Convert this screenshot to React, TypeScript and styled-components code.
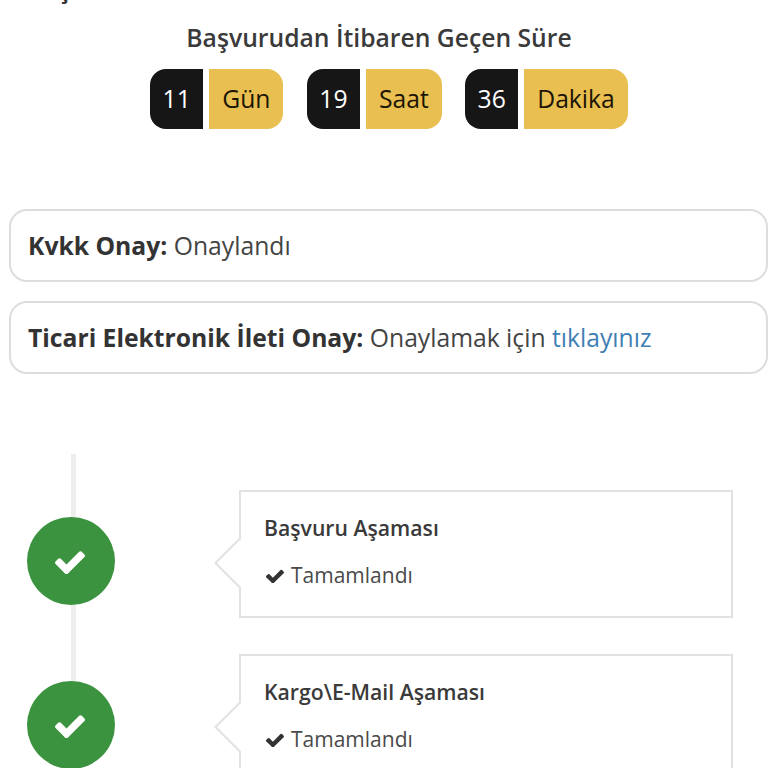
import styled, { createGlobalStyle } from 'styled-components';

const GlobalStyle = createGlobalStyle`
    html, body {
        margin: 0;
        padding: 0;
        background: #fff;
        overflow: hidden;
    }

    body {
        font-family: "Open Sans", "Liberation Sans", sans-serif;
        color: #333;
    }
`;

const Page = styled.div`
    width: 768px;
    height: 768px;
    overflow: hidden;
`;

const PageTitle = styled.h1`
    margin: -27px 0 0 28px;
    font-size: 24px;
    line-height: 32px;
    font-weight: 700;
    color: #333;
`;

const Elapsed = styled.section`
    padding-top: 17px;
    display: flex;
    flex-direction: column;
    align-items: center;
`;

const ElapsedTitle = styled.h2`
    margin: 0 10px 15px 0;
    font-size: 24.7px;
    line-height: 32px;
    font-weight: 600;
    color: #3a3a3a;
`;

const Counters = styled.div`
    display: flex;
    gap: 23.5px;
    margin-left: 10px;
`;

const Counter = styled.div`
    display: flex;
    gap: 6px;
    height: 60px;
`;

const CounterValue = styled.span`
    background: #161616;
    color: #fff;
    width: 53px;
    padding-bottom: 2px;
    box-sizing: border-box;
    border-radius: 16px 0 0 16px;
    display: flex;
    align-items: center;
    justify-content: center;
    font-size: 24.7px;
`;

const CounterUnit = styled.span`
    background: #e8bf50;
    color: #1c1505;
    padding: 0 13px 2px;
    border-radius: 0 16px 16px 0;
    display: flex;
    align-items: center;
    font-size: 24.7px;
`;

const Consents = styled.section`
    margin: 80px 0 0 9px;
    display: flex;
    flex-direction: column;
    gap: 19px;
`;

const ConsentCard = styled.div`
    width: 759px;
    height: 73px;
    box-sizing: border-box;
    border: 2px solid #ddd;
    border-radius: 18px;
    padding: 0 0 1px 17px;
    display: flex;
    align-items: center;
    font-size: 24.7px;
    white-space: pre;
    color: #444;

    b {
        font-weight: 700;
        color: #333;
    }
`;

const ConsentLink = styled.a`
    color: #3f7fb5;
    text-decoration: none;
`;

const Timeline = styled.section`
    position: relative;
    margin: 80px 0 0 27px;
    padding-top: 36px;
    display: flex;
    flex-direction: column;
    gap: 36px;

    &::before {
        content: '';
        position: absolute;
        left: 44px;
        top: 0;
        bottom: 0;
        width: 5px;
        background: #eee;
    }
`;

const Step = styled.div`
    position: relative;
    display: flex;
    align-items: center;
    height: 128px;
`;

const StepBadge = styled.div`
    position: relative;
    width: 88px;
    height: 88px;
    margin-top: 14px;
    flex: none;
    border-radius: 50%;
    background: #3c933f;
    color: #fff;
    display: flex;
    align-items: center;
    justify-content: center;
    padding: 2px 2px 0 0;
    box-sizing: border-box;
`;

const StepPanel = styled.div`
    position: relative;
    margin-left: 124px;
    width: 494px;
    height: 128px;
    box-sizing: border-box;
    border: 2px solid #e2e2e2;
    padding: 22px 23px;
    background: #fff;

    &::before {
        content: '';
        position: absolute;
        left: -27px;
        top: 46px;
        width: 0;
        height: 0;
        border-top: 25px solid transparent;
        border-bottom: 25px solid transparent;
        border-right: 25px solid #e2e2e2;
    }

    &::after {
        content: '';
        position: absolute;
        left: -24px;
        top: 47px;
        border-top: 24px solid transparent;
        border-bottom: 24px solid transparent;
        border-right: 24px solid #fff;
    }
`;

const StepTitle = styled.h4`
    margin: 0 0 19px;
    font-size: 21.2px;
    line-height: 28px;
    font-weight: 600;
    color: #3a3a3a;
`;

const StepStatus = styled.div`
    display: flex;
    align-items: center;
    gap: 7px;
    font-size: 21px;
    line-height: 28px;
    color: #4a4a4a;

    svg {
        color: #333;
        margin: 2px 0 0 2px;
    }
`;

// font-awesome 4 style check, cropped to the glyph's own bounds
const CheckIcon = ({ width }: { width: number }) => (
    <svg width={width} height={width * 0.807} viewBox="120 270 1552 1252" fill="currentColor">
        <path d="M1671 566q0 40-28 68l-724 724-136 136q-28 28-68 28t-68-28l-136-136-362-362q-28-28-28-68t28-68l136-136q28-28 68-28t68 28l294 295 656-657q28-28 68-28t68 28l136 136q28 28 28 68z" />
    </svg>
);

const steps = ['Başvuru Aşaması', 'Kargo\\E-Mail Aşaması'];

const counters = [
    { value: '11', unit: 'Gün' },
    { value: '19', unit: 'Saat' },
    { value: '36', unit: 'Dakika' },
];

export default function App() {
    return (
        <Page>
            <GlobalStyle />
            <PageTitle>Başvuru Durumu</PageTitle>
            <Elapsed>
                <ElapsedTitle>Başvurudan İtibaren Geçen Süre</ElapsedTitle>
                <Counters>
                    {counters.map(c => (
                        <Counter key={c.unit}>
                            <CounterValue>{c.value}</CounterValue>
                            <CounterUnit>{c.unit}</CounterUnit>
                        </Counter>
                    ))}
                </Counters>
            </Elapsed>
            <Consents>
                <ConsentCard><b>Kvkk Onay:</b> Onaylandı</ConsentCard>
                <ConsentCard>
                    <b>Ticari Elektronik İleti Onay:</b> Onaylamak için <ConsentLink href="#">tıklayınız</ConsentLink>
                </ConsentCard>
            </Consents>
            <Timeline>
                {steps.map(title => (
                    <Step key={title}>
                        <StepBadge>
                            <CheckIcon width={30} />
                        </StepBadge>
                        <StepPanel>
                            <StepTitle>{title}</StepTitle>
                            <StepStatus>
                                <CheckIcon width={18} />
                                Tamamlandı
                            </StepStatus>
                        </StepPanel>
                    </Step>
                ))}
            </Timeline>
        </Page>
    );
}
